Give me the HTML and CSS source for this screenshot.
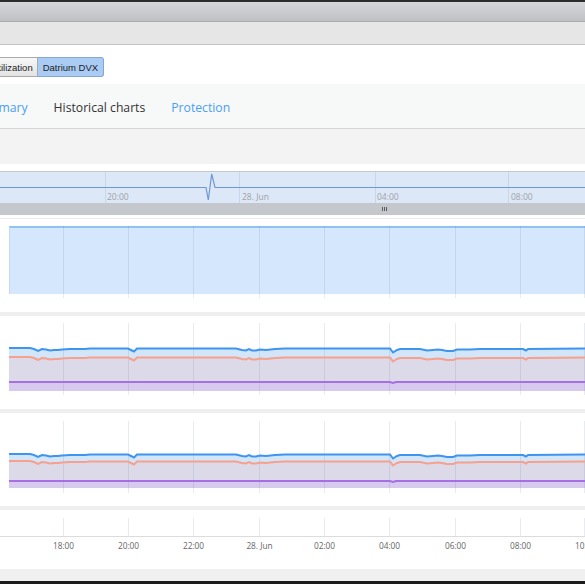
FILE: index.html
```html
<!DOCTYPE html>
<html lang="en">
<head>
    <meta charset="UTF-8">
    <title>Datrium DVX - Historical charts</title>
    <link rel="stylesheet" href="styles.css">
</head>
<body>
    <div class="window">
        <div class="window-edge"></div>
        <div class="titlebar"></div>
        <div class="toolbar"></div>

        <div class="selector">
            <div class="btn-group">
                <button class="btn">Utilization</button>
                <button class="btn active">Datrium DVX</button>
            </div>
        </div>

        <div class="tabs">
            <a class="tab">Summary</a>
            <a class="tab current">Historical charts</a>
            <a class="tab">Protection</a>
        </div>

        <div class="filterbar"></div>

        <!-- shared wave shape, baseline at y=0 -->
        <svg class="defs" width="0" height="0">
            <defs>
                <path id="wave" d="M9 0 L30 0 L34 1 L38 3 L42 1 L46 1.5 L50 2.5 L54 2 L58 2 L62 1.5 L70 1 L85 1 L90 0.5 L128 0.5 L131 2 L134 3.5 L137 0.5 L236 0.5 L242 2 L246 2.5 L249 1 L252 2.5 L256 2.5 L260 1.5 L266 2 L275 1 L285 0.5 L390 0.5 L393 4.5 L397 2 L400 1 L420 1 L427 2.5 L433 2 L438 1.5 L442 2 L447 3 L453 3 L457 1.5 L470 1.5 L480 1 L523 1 L526 2.5 L528 1 L585 0.5"/>
                <path id="waveArea" d="M9 0 L30 0 L34 1 L38 3 L42 1 L46 1.5 L50 2.5 L54 2 L58 2 L62 1.5 L70 1 L85 1 L90 0.5 L128 0.5 L131 2 L134 3.5 L137 0.5 L236 0.5 L242 2 L246 2.5 L249 1 L252 2.5 L256 2.5 L260 1.5 L266 2 L275 1 L285 0.5 L390 0.5 L393 4.5 L397 2 L400 1 L420 1 L427 2.5 L433 2 L438 1.5 L442 2 L447 3 L453 3 L457 1.5 L470 1.5 L480 1 L523 1 L526 2.5 L528 1 L585 0.5 L585 120 L9 120 Z"/>
                <g id="grid">
                    <line x1="63.5" y1="0" x2="63.5" y2="72"/>
                    <line x1="128.5" y1="0" x2="128.5" y2="72"/>
                    <line x1="193.5" y1="0" x2="193.5" y2="72"/>
                    <line x1="259.5" y1="0" x2="259.5" y2="72"/>
                    <line x1="324.5" y1="0" x2="324.5" y2="72"/>
                    <line x1="389.5" y1="0" x2="389.5" y2="72"/>
                    <line x1="455.5" y1="0" x2="455.5" y2="72"/>
                    <line x1="520.5" y1="0" x2="520.5" y2="72"/>
                    <line x1="584.5" y1="0" x2="584.5" y2="72"/>
                </g>
                <clipPath id="plotClip">
                    <rect x="9" y="0" width="576" height="75"/>
                </clipPath>
            </defs>
        </svg>

        <div class="navigator">
            <svg width="585" height="44" viewBox="0 0 585 44">
                <rect x="0" y="0" width="585" height="1" fill="#c5c7ca"/>
                <rect x="0" y="1" width="585" height="31" fill="#dce8f8"/>
                <g class="nav-grid">
                    <line x1="105.5" y1="1" x2="105.5" y2="32"/>
                    <line x1="239.5" y1="1" x2="239.5" y2="32"/>
                    <line x1="375.5" y1="1" x2="375.5" y2="32"/>
                    <line x1="508.5" y1="1" x2="508.5" y2="32"/>
                </g>
                <path class="nav-series" d="M0 16.5 L206 16.5 L208.3 29 L211.7 3 L215 16.5 L585 16.5"/>
                <text class="nav-label" x="107" y="29">20:00</text>
                <text class="nav-label" x="242" y="29">28. Jun</text>
                <text class="nav-label" x="377" y="29">04:00</text>
                <text class="nav-label" x="511" y="29">08:00</text>
                <rect x="0" y="32" width="585" height="12" fill="#c4c8cc"/>
                <g class="grip">
                    <line x1="382.5" y1="36" x2="382.5" y2="40"/>
                    <line x1="384.5" y1="36" x2="384.5" y2="40"/>
                    <line x1="386.5" y1="36" x2="386.5" y2="40"/>
                </g>
            </svg>
        </div>

        <div class="charts">
            <!-- chart 1 -->
            <svg class="chart" width="585" height="93" viewBox="0 0 585 93">
                <rect x="9" y="7" width="576" height="68" fill="#d4e7fc"/>
                <line x1="9" y1="8" x2="585" y2="8" stroke="#8fc3f6" stroke-width="2"/>
                <line x1="9.5" y1="8" x2="9.5" y2="75" stroke="#c4d8ef"/>
                <use href="#grid" class="grid" transform="translate(0,7)"/>
            </svg>
            <div class="sep"></div>

            <!-- chart 2 -->
            <svg class="chart" width="585" height="93" viewBox="0 0 585 93">
                <g clip-path="url(#plotClip)">
                    <use href="#waveArea" transform="translate(0,32)" fill="#d3e5f8"/>
                    <use href="#waveArea" transform="translate(0,41)" fill="#dcd9e9"/>
                    <rect x="9" y="66" width="576" height="9" fill="#d8c9ef"/>
                </g>
                <use href="#grid" class="grid" transform="translate(0,7)"/>
                <use href="#wave" class="line blue" transform="translate(0,32)"/>
                <use href="#wave" class="line orange" transform="translate(0,41)"/>
                <path class="line purple" d="M9 66 L390 66 L393 67 L396 66 L585 66"/>
            </svg>
            <div class="sep"></div>

            <!-- chart 3 -->
            <svg class="chart" width="585" height="93" viewBox="0 0 585 93">
                <g clip-path="url(#plotClip)">
                    <use href="#waveArea" transform="translate(0,41)" fill="#d3e5f8"/>
                    <use href="#waveArea" transform="translate(0,48)" fill="#dcd9e9"/>
                    <rect x="9" y="68" width="576" height="7" fill="#d8c9ef"/>
                </g>
                <use href="#grid" class="grid" transform="translate(0,8)"/>
                <use href="#wave" class="line blue" transform="translate(0,41)"/>
                <use href="#wave" class="line orange" transform="translate(0,48)"/>
                <path class="line purple" d="M9 68 L390 68 L393 69 L396 68 L585 68"/>
            </svg>
            <div class="sep"></div>

            <!-- time axis -->
            <svg class="chart" width="585" height="59" viewBox="0 0 585 59">
                <g class="grid">
                    <line x1="63.5" y1="8" x2="63.5" y2="26"/>
                    <line x1="128.5" y1="8" x2="128.5" y2="26"/>
                    <line x1="193.5" y1="8" x2="193.5" y2="26"/>
                    <line x1="259.5" y1="8" x2="259.5" y2="26"/>
                    <line x1="324.5" y1="8" x2="324.5" y2="26"/>
                    <line x1="389.5" y1="8" x2="389.5" y2="26"/>
                    <line x1="455.5" y1="8" x2="455.5" y2="26"/>
                    <line x1="520.5" y1="8" x2="520.5" y2="26"/>
                    <line x1="584.5" y1="8" x2="584.5" y2="26"/>
                </g>
                <line x1="0" y1="26.5" x2="585" y2="26.5" stroke="#dcdcdc"/>
                <text class="axis-label" x="63.5" y="39">18:00</text>
                <text class="axis-label" x="128.5" y="39">20:00</text>
                <text class="axis-label" x="193.5" y="39">22:00</text>
                <text class="axis-label" x="259.5" y="39">28. Jun</text>
                <text class="axis-label" x="324.5" y="39">02:00</text>
                <text class="axis-label" x="389.5" y="39">04:00</text>
                <text class="axis-label" x="455.5" y="39">06:00</text>
                <text class="axis-label" x="520.5" y="39">08:00</text>
                <text class="axis-label" x="585.5" y="39">10:00</text>
            </svg>
        </div>

        <div class="statusbar"></div>
        <div class="window-edge bottom"></div>
    </div>
</body>
</html>
```

FILE: styles.css
```css
html, body {
    margin: 0;
    padding: 0;
    background-color: #fff;
    overflow: hidden;
}

body {
    font-family: "Open Sans", "Liberation Sans", sans-serif;
    color: #333;
}

.window {
    width: 585px;
    height: 585px;
    overflow: hidden;
}

.window-edge {
    height: 2px;
    background-color: #2d2d2d;
}

.window-edge.bottom {
    height: 3px;
    background-color: #1c1c1c;
}

.titlebar {
    height: 19px;
    background: linear-gradient(#d7d8db, #bfc0c3);
    border-bottom: 1px solid #a9aaad;
}

.toolbar {
    height: 22px;
    background-color: #e6e6e6;
    border-bottom: 1px solid #c4c4c4;
}

.selector {
    height: 39px;
    padding-top: 12px;
    box-sizing: border-box;
    background-color: #fff;
}

.btn-group {
    display: flex;
    margin-left: -14px;
}

.btn {
    height: 20px;
    padding: 0 4.5px;
    font-family: "Liberation Sans", Arial, sans-serif;
    font-size: 9.5px;
    color: #222;
    border: 1px solid #a9a9a9;
    background: linear-gradient(#f7f7f7, #e3e3e3);
    border-radius: 0;
}

.btn.active {
    background: #a9cbf4;
    border-color: #86a6d2;
    border-left: none;
    border-radius: 0 3px 3px 0;
}

.tabs {
    display: flex;
    align-items: center;
    gap: 26px;
    height: 45px;
    padding: 2px 0 0 0;
    margin-left: -27px;
    box-sizing: border-box;
    background-color: #f7f8f8;
    border-bottom: 1px solid #d6d6d6;
}

.tab {
    font-size: 12.2px;
    color: #4aa0f4;
    white-space: nowrap;
}

.tab.current {
    color: #333;
}

.filterbar {
    height: 35px;
    background-color: #f3f3f3;
    margin-bottom: 7px;
}

.defs {
    position: absolute;
    width: 0;
    height: 0;
}

.navigator svg,
.chart {
    display: block;
}

.nav-grid line {
    stroke: #c7d6ea;
    stroke-width: 1;
}

.nav-series {
    fill: none;
    stroke: #6e97d4;
    stroke-width: 1.2;
}

.nav-label {
    font-size: 8.5px;
    fill: #a2a2a2;
}

.grip line {
    stroke: #5c5c5c;
    stroke-width: 1;
}

.charts {
    margin-top: 3px;
    border-top: 1px solid #ececec;
}

.grid line,
.grid {
    stroke: rgba(90, 110, 140, 0.14);
    stroke-width: 1;
}

.line {
    fill: none;
    stroke-width: 2;
}

.blue {
    stroke: #3d95f0;
}

.orange {
    stroke: #f7a08b;
}

.purple {
    stroke: #a66fe6;
}

.sep {
    height: 4px;
    background-color: #efefef;
}

.axis-label {
    font-size: 8.3px;
    fill: #666;
    text-anchor: middle;
}

.statusbar {
    height: 12px;
    background-color: #f0f0f0;
}
```
